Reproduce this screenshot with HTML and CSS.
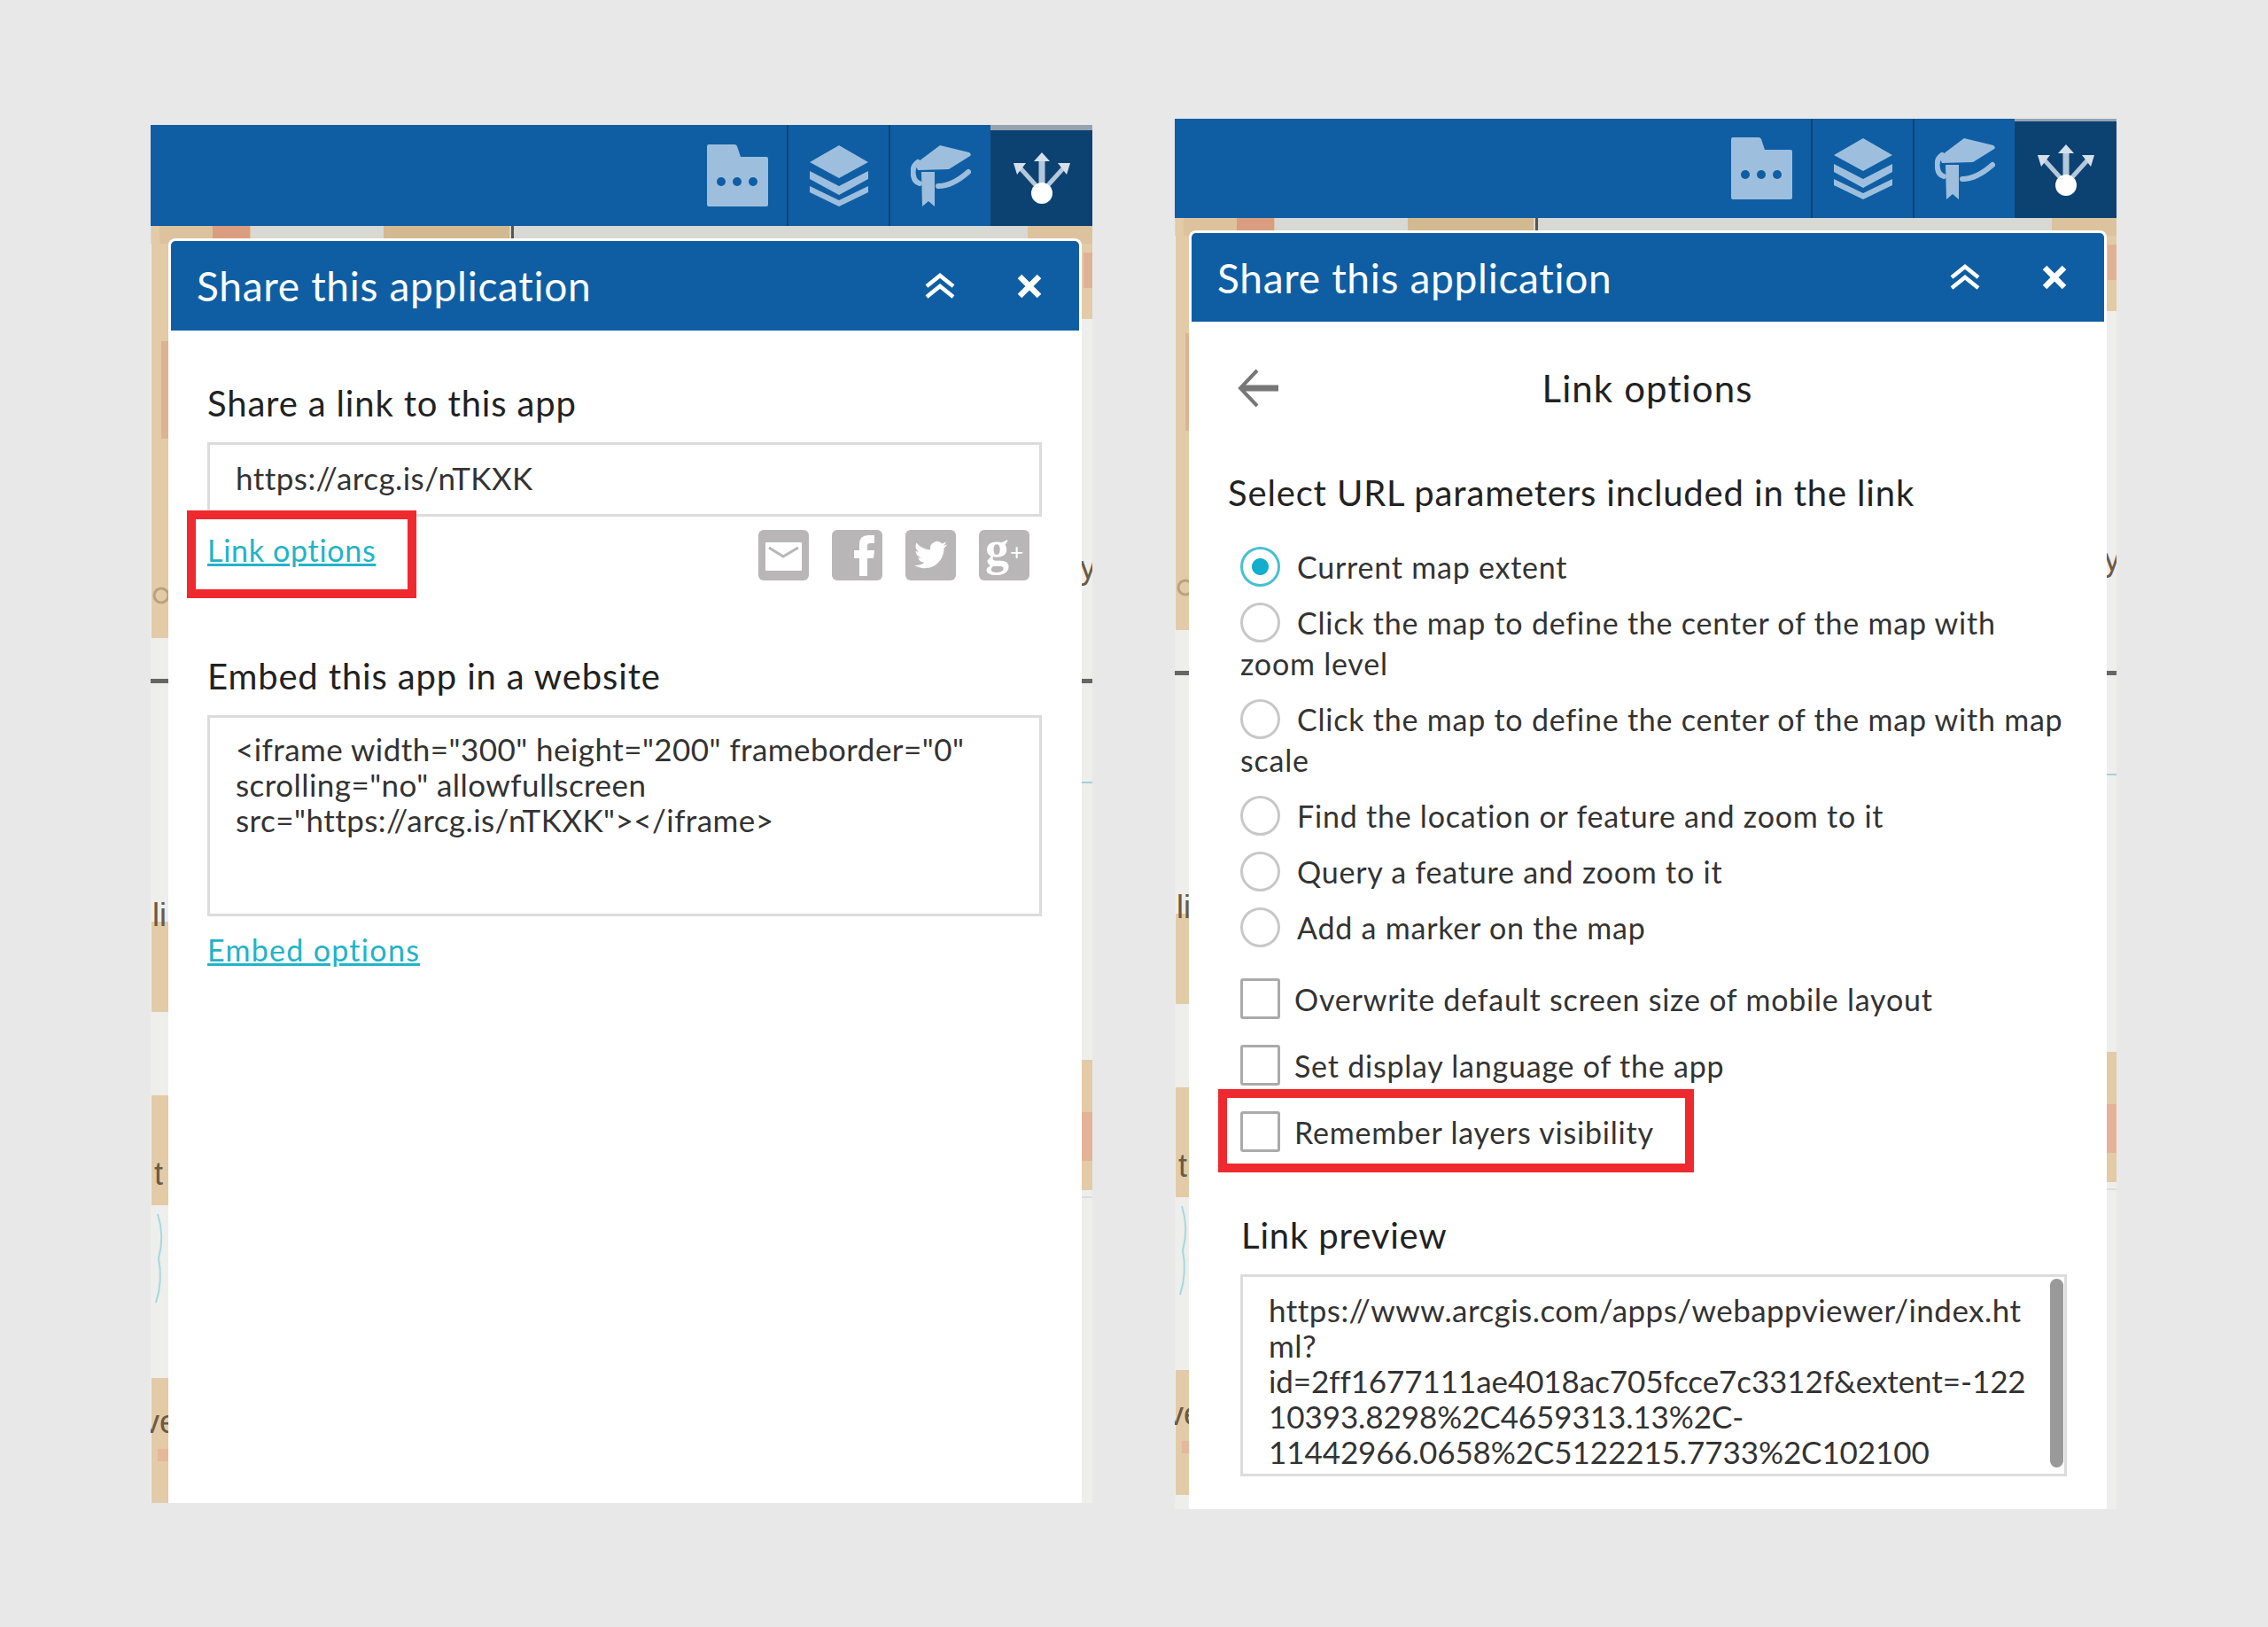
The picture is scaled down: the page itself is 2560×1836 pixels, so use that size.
FILE: index.html
```html
<!DOCTYPE html>
<html lang="en">

<head>
    <meta charset="UTF-8">
    <title>Share this application</title>
    <link rel="stylesheet" href="styles.css">
</head>

<body>
    <!-- shared icons and map art -->
    <svg class="sprite" width="0" height="0">
        <defs>
            <symbol id="ico-folder" viewBox="0 0 69 70">
                <path class="ico-fill" d="M2 0H31Q33 0 34 2L38 14H67Q69 14 69 16V68Q69 70 67 70H2Q0 70 0 68V2Q0 0 2 0Z" />
                <circle class="ico-hole" cx="16" cy="42" r="5" />
                <circle class="ico-hole" cx="34" cy="42" r="5" />
                <circle class="ico-hole" cx="52" cy="42" r="5" />
            </symbol>
            <symbol id="ico-layers" viewBox="0 0 66 69">
                <path class="ico-fill" d="M33 0L66 19L33 37L0 19Z" />
                <path class="ico-fill" d="M0 29L33 46L66 29V38L33 56L0 38Z" />
                <path class="ico-fill" d="M0 46L33 62L66 46V53L33 69L0 53Z" />
            </symbol>
            <symbol id="ico-cap" viewBox="0 0 68 69">
                <path class="ico-fill" d="M5 21L33 0L66 8Q69 10 67 12L43 27L8 28Z" />
                <path class="ico-line" d="M8 19Q1 24 3 34Q4 41 10 43" />
                <path class="ico-fill" d="M12 30H27V69L20 63L13 69Z" />
                <path class="ico-line" d="M31 46Q47 46 65 30" />
            </symbol>
            <symbol id="ico-share" viewBox="0 0 66 58">
                <g class="ico-arrows">
                    <path class="ico-stem" d="M33 42V8" />
                    <path d="M27 38L9 18" />
                    <path d="M39 38L57 18" />
                </g>
                <path class="ico-tip" d="M33 0L42 10H24Z" />
                <path class="ico-tip" d="M1 12H15L5 25Z" />
                <path class="ico-tip" d="M65 12H51L61 25Z" />
                <circle class="ico-dot" cx="33" cy="46" r="12" />
            </symbol>
            <symbol id="ico-collapse" viewBox="0 0 36 30">
                <path class="ico-stroke" d="M3 15L18 3L33 15M3 27L18 15L33 27" />
            </symbol>
            <symbol id="ico-close" viewBox="0 0 30 30">
                <path class="ico-stroke thick" d="M4 4L26 26M26 4L4 26" />
            </symbol>
            <symbol id="map-art" viewBox="0 0 1063 1470">
                <rect width="1063" height="1470" fill="#eeeeec" />
                <rect width="1063" height="20" fill="#d8d8d4" />
                <rect x="1" width="19" height="465" fill="#e2cba6" />
                <rect x="10" width="103" height="20" fill="#dcc39d" />
                <rect x="70" width="42" height="20" fill="#db9d80" />
                <rect x="263" width="142" height="20" fill="#d3b98f" />
                <rect x="407" width="3" height="20" fill="#555" />
                <rect x="990" width="73" height="20" fill="#dcc39d" />
                <rect x="12" y="130" width="8" height="110" fill="#dcb394" />
                <circle cx="12" cy="417" r="8" fill="none" stroke="#b9a27e" stroke-width="3" />
                <rect y="511" width="20" height="5" fill="#666" />
                <rect x="1" y="785" width="19" height="102" fill="#e2cba6" />
                <text class="map-label" x="2" y="790">li</text>
                <rect x="1" y="981" width="19" height="124" fill="#e2cba6" />
                <text class="map-label" x="4" y="1082">t</text>
                <path d="M8 1115Q16 1140 9 1165Q14 1190 6 1215" fill="none" stroke="#a5d8de" stroke-width="2" />
                <rect x="1" y="1300" width="19" height="141" fill="#e2cba6" />
                <text class="map-label" x="-8" y="1362">ve</text>
                <rect x="8" y="1380" width="12" height="14" fill="#e5b79c" />
                <rect x="1051" y="20" width="12" height="85" fill="#e2cba6" />
                <rect x="1053" y="30" width="10" height="40" fill="#e0b295" />
                <text class="map-label" x="1049" y="398">y</text>
                <rect x="1051" y="511" width="12" height="5" fill="#666" />
                <rect x="1051" y="627" width="12" height="2" fill="#9fd3da" />
                <rect x="1051" y="941" width="12" height="147" fill="#e2cba6" />
                <rect x="1051" y="1000" width="12" height="55" fill="#e4b299" />
                <rect x="1051" y="1095" width="12" height="2" fill="#ddd" />
            </symbol>
        </defs>
    </svg>

    <div class="shots">
        <div class="window window-left">
            <svg class="map" width="1063" height="1470"><use href="#map-art" /></svg>
            <div class="toolbar">
                <div class="tool"><svg class="ico-folder" width="69" height="70"><use href="#ico-folder" /></svg></div>
                <div class="tool"><svg width="66" height="69"><use href="#ico-layers" /></svg></div>
                <div class="tool"><svg width="68" height="69"><use href="#ico-cap" /></svg></div>
                <div class="tool tool-active"><svg width="66" height="58"><use href="#ico-share" /></svg></div>
            </div>
            <div class="panel">
                <div class="panel-head">
                    <div class="panel-title">Share this application</div>
                    <svg class="btn-collapse" width="36" height="30"><use href="#ico-collapse" /></svg>
                    <svg class="btn-close" width="30" height="30"><use href="#ico-close" /></svg>
                </div>
                <div class="panel-body">
                    <h3 class="section-title">Share a link to this app</h3>
                    <div class="field field-link">https://arcg.is/nTKXK</div>
                    <div class="share-row">
                        <a class="link">Link options</a>
                        <div class="social">
                            <svg viewBox="0 0 57 57">
                                <rect class="social-bg" width="57" height="57" rx="6" />
                                <rect class="social-fg" x="8" y="14" width="41" height="32" rx="1" />
                                <path class="social-mark" d="M12 20L28 30L45 20" />
                            </svg>
                            <svg viewBox="0 0 57 57">
                                <rect class="social-bg" width="57" height="57" rx="6" />
                                <path class="social-fg" d="M31 52V32H25V23H31V16Q31 6 41 6H48V15H43Q40 15 40 18V23H48L47 32H40V52Z" />
                            </svg>
                            <svg viewBox="0 0 57 57">
                                <rect class="social-bg" width="57" height="57" rx="6" />
                                <path class="social-fg" transform="translate(10 9.5) scale(1.55)" d="M23.953 4.57a10 10 0 01-2.825.775 4.958 4.958 0 002.163-2.723c-.951.555-2.005.959-3.127 1.184a4.92 4.92 0 00-8.384 4.482C7.69 8.095 4.067 6.13 1.64 3.162a4.822 4.822 0 00-.666 2.475c0 1.71.87 3.213 2.188 4.096a4.904 4.904 0 01-2.228-.616v.06a4.923 4.923 0 003.946 4.827 4.996 4.996 0 01-2.212.085 4.936 4.936 0 004.604 3.417 9.867 9.867 0 01-6.102 2.105c-.39 0-.779-.023-1.17-.067a13.995 13.995 0 007.557 2.209c9.053 0 13.998-7.496 13.998-13.985 0-.21 0-.42-.015-.63A9.935 9.935 0 0024 4.59z" />
                            </svg>
                            <div class="gplus"><span class="gplus-g">g</span><span class="gplus-plus">+</span></div>
                        </div>
                    </div>
                    <h3 class="section-title embed-title">Embed this app in a website</h3>
                    <div class="field field-code">&lt;iframe width="300" height="200" frameborder="0"<br>scrolling="no" allowfullscreen<br>src="https://arcg.is/nTKXK"&gt;&lt;/iframe&gt;</div>
                    <a class="link embed-link">Embed options</a>
                </div>
            </div>
            <div class="callout callout-link"></div>
        </div>

        <div class="window window-right">
            <svg class="map" width="1063" height="1470"><use href="#map-art" /></svg>
            <div class="toolbar">
                <div class="tool"><svg class="ico-folder" width="69" height="70"><use href="#ico-folder" /></svg></div>
                <div class="tool"><svg width="66" height="69"><use href="#ico-layers" /></svg></div>
                <div class="tool"><svg width="68" height="69"><use href="#ico-cap" /></svg></div>
                <div class="tool tool-active"><svg width="66" height="58"><use href="#ico-share" /></svg></div>
            </div>
            <div class="panel">
                <div class="panel-head">
                    <div class="panel-title">Share this application</div>
                    <svg class="btn-collapse" width="36" height="30"><use href="#ico-collapse" /></svg>
                    <svg class="btn-close" width="30" height="30"><use href="#ico-close" /></svg>
                </div>
                <div class="panel-body">
                    <div class="sub-head">
                        <svg class="btn-back" width="46" height="44" viewBox="0 0 46 44">
                            <path d="M22 2L3 22L22 42" />
                            <path class="btn-back-bar" d="M4 22H46" />
                        </svg>
                        <div class="sub-title">Link options</div>
                    </div>
                    <h3 class="section-title select-title">Select URL parameters included in the link</h3>
                    <div class="options">
                        <label class="opt"><input type="radio" name="param" checked>Current map extent</label>
                        <label class="opt"><input type="radio" name="param">Click the map to define the center of the map with zoom level</label>
                        <label class="opt"><input type="radio" name="param">Click the map to define the center of the map with map scale</label>
                        <label class="opt"><input type="radio" name="param">Find the location or feature and zoom to it</label>
                        <label class="opt"><input type="radio" name="param">Query a feature and zoom to it</label>
                        <label class="opt"><input type="radio" name="param">Add a marker on the map</label>
                    </div>
                    <div class="checks">
                        <label class="check"><input type="checkbox">Overwrite default screen size of mobile layout</label>
                        <label class="check"><input type="checkbox">Set display language of the app</label>
                        <label class="check"><input type="checkbox">Remember layers visibility</label>
                    </div>
                    <h3 class="section-title preview-title">Link preview</h3>
                    <div class="field field-preview">https://www.arcgis.com/apps/webappviewer/index.ht<br>ml?<br><span class="digits">id=2ff1677111ae4018ac705fcce7c3312f&amp;extent=-122<br>10393.8298%2C4659313.13%2C-<br>11442966.0658%2C5122215.7733%2C102100</span><div class="scroll-thumb"></div></div>
                </div>
            </div>
            <div class="callout callout-check"></div>
        </div>
    </div>
</body>

</html>
```

FILE: styles.css
```css
body {
    margin: 0;
    background-color: #e8e8e8;
    font-family: Lato, "Open Sans", sans-serif;
    color: #2b2b2b;
}

.sprite {
    position: absolute;
}

.shots {
    display: flex;
    align-items: flex-start;
    gap: 93px;
    padding: 134px 0 0 170px;
}

.window {
    position: relative;
    display: flex;
    flex-direction: column;
    width: 1063px;
    overflow: hidden;
}

.window-left {
    height: 1555px;
    margin-top: 7px;
}

.window-right {
    height: 1569px;
}

.map {
    position: absolute;
    left: 0;
    top: 114px;
}

.window-right .map {
    top: 112px;
}

.map-label {
    font-family: "Liberation Sans", sans-serif;
    font-size: 36px;
    fill: #6b5a45;
}

/* toolbar */
.toolbar {
    position: relative;
    display: flex;
    justify-content: flex-end;
    flex: none;
    height: 114px;
    background-color: #0f5ea3;
}

.window-right .toolbar {
    height: 112px;
}

.tool {
    display: flex;
    align-items: center;
    justify-content: center;
    box-sizing: border-box;
    width: 115px;
    border-left: 2px solid #0c4474;
}

.tool:first-child {
    border-left: 0;
}

.ico-folder {
    margin-left: 3px;
}

.tool-active {
    border-left: 0;
    border-top: 6px solid #96a3af;
    background-color: #0c4272;
}

.window-right .tool-active {
    border-top-width: 3px;
}

.ico-fill {
    fill: #9dbfdd;
}

.ico-hole {
    fill: #0f5ea3;
}

.ico-line {
    fill: none;
    stroke: #9dbfdd;
    stroke-width: 6;
    stroke-linecap: round;
}

.ico-arrows {
    fill: none;
    stroke: #b4c8da;
    stroke-width: 5;
}

.ico-stem {
    stroke-width: 7;
}

.ico-tip {
    fill: #d5e0ea;
}

.ico-dot {
    fill: #fff;
}

.ico-stroke {
    fill: none;
    stroke: #fff;
    stroke-width: 4.5;
}

.ico-stroke.thick {
    stroke-width: 6.5;
}

/* panel */
.panel {
    position: relative;
    display: flex;
    flex-direction: column;
    flex: 1;
    box-sizing: border-box;
    width: 1031px;
    margin: 14px 0 0 20px;
    border: 3px solid #fff;
    border-bottom: 0;
    border-radius: 8px 8px 0 0;
    background-color: #fff;
}

.window-right .panel {
    width: 1036px;
    margin-left: 16px;
}

.panel-head {
    display: flex;
    align-items: center;
    flex: none;
    height: 101px;
    padding: 0 41px 0 29px;
    border-radius: 5px 5px 0 0;
    background-color: #0f5ea3;
    color: #fff;
}

.window-right .panel-head {
    height: 100px;
}

.panel-title {
    flex: 1;
    font-size: 46px;
    letter-spacing: 0.7px;
}

.btn-close {
    margin-left: 68px;
}

.panel-body {
    padding: 58px 42px 0 41px;
}

.section-title {
    margin: 0;
    font-size: 40px;
    font-weight: 400;
    letter-spacing: 0.85px;
    line-height: 48px;
    color: #222;
}

.field {
    box-sizing: border-box;
    margin-top: 20px;
    border: 3px solid #dcdcdc;
    background-color: #fff;
    font-size: 35px;
    letter-spacing: 0.45px;
    line-height: 40px;
    color: #333;
}

.field-link {
    height: 84px;
    padding: 17px 29px;
}

.field-code {
    height: 227px;
    padding: 15px 29px;
}

.share-row {
    display: flex;
    justify-content: space-between;
    margin-top: 15px;
    padding-right: 14px;
}

.link {
    font-size: 34px;
    letter-spacing: 0.7px;
    line-height: 46px;
    color: #22b3c8;
    text-decoration: underline;
}

.social {
    display: flex;
    gap: 26px;
}

.social svg {
    width: 57px;
    height: 57px;
}

.social-bg {
    fill: #b8b6b6;
}

.social-fg {
    fill: #fff;
}

.social-mark {
    fill: none;
    stroke: #b8b6b6;
    stroke-width: 3;
}

.gplus {
    display: flex;
    align-items: center;
    justify-content: center;
    gap: 1px;
    width: 57px;
    height: 57px;
    border-radius: 6px;
    background-color: #b8b6b6;
    color: #fff;
    line-height: 57px;
}

.gplus-g {
    font-family: "Liberation Serif", serif;
    font-size: 54px;
    font-weight: 700;
    margin-top: -14px;
}

.gplus-plus {
    font-family: "Liberation Sans", sans-serif;
    font-size: 26px;
    margin-top: -6px;
}

.embed-title {
    margin-top: 84px;
}

.embed-link {
    display: block;
    margin-top: 15px;
    letter-spacing: 1.3px;
}

/* link options view */
.window-right .panel-body {
    padding: 51px 42px 0 41px;
}

.sub-head {
    position: relative;
    display: flex;
    align-items: center;
    justify-content: center;
    height: 48px;
}

.btn-back {
    position: absolute;
    left: 11px;
    top: 2px;
    fill: none;
    stroke: #777;
    stroke-width: 4;
}

.btn-back-bar {
    stroke-width: 7;
}

.sub-title {
    font-size: 42px;
    letter-spacing: 1.1px;
    color: #222;
}

.select-title {
    margin-top: 70px;
}

.options {
    margin: 37px 0 0 14px;
}

.opt {
    display: block;
    margin-bottom: 17px;
    font-size: 34px;
    letter-spacing: 0.78px;
    line-height: 46px;
    color: #333;
}

.opt input {
    appearance: none;
    box-sizing: border-box;
    width: 45px;
    height: 45px;
    margin: 0 19px 0 0;
    border: 3px solid #c8c8c8;
    border-radius: 50%;
    background-color: #fff;
    vertical-align: top;
}

.opt input:checked {
    border-color: #49bfd4;
    background: radial-gradient(circle, #11aecd 0 9px, #fff 10px);
}

.checks {
    display: flex;
    flex-direction: column;
    gap: 29px;
    margin: 34px 0 0 14px;
}

.check {
    display: flex;
    align-items: center;
    gap: 16px;
    height: 46px;
    font-size: 34px;
    letter-spacing: 0.78px;
    color: #333;
}

.check input {
    appearance: none;
    box-sizing: border-box;
    flex: none;
    width: 45px;
    height: 46px;
    margin: 0;
    border: 3px solid #aaa;
    border-radius: 3px;
    background-color: #fff;
}

.preview-title {
    margin: 70px 0 0 15px;
}

.field-preview {
    position: relative;
    height: 228px;
    margin-left: 14px;
    padding: 17px 29px;
}

.digits {
    letter-spacing: -0.08px;
}

.scroll-thumb {
    position: absolute;
    top: 2px;
    right: 1px;
    width: 15px;
    height: 213px;
    border-radius: 8px;
    background-color: #999;
}

/* red annotation boxes */
.callout {
    position: absolute;
    box-sizing: border-box;
    border: 10px solid #ee2a2e;
}

.callout-link {
    left: 41px;
    top: 435px;
    width: 259px;
    height: 99px;
}

.callout-check {
    left: 49px;
    top: 1095px;
    width: 537px;
    height: 94px;
}
```
